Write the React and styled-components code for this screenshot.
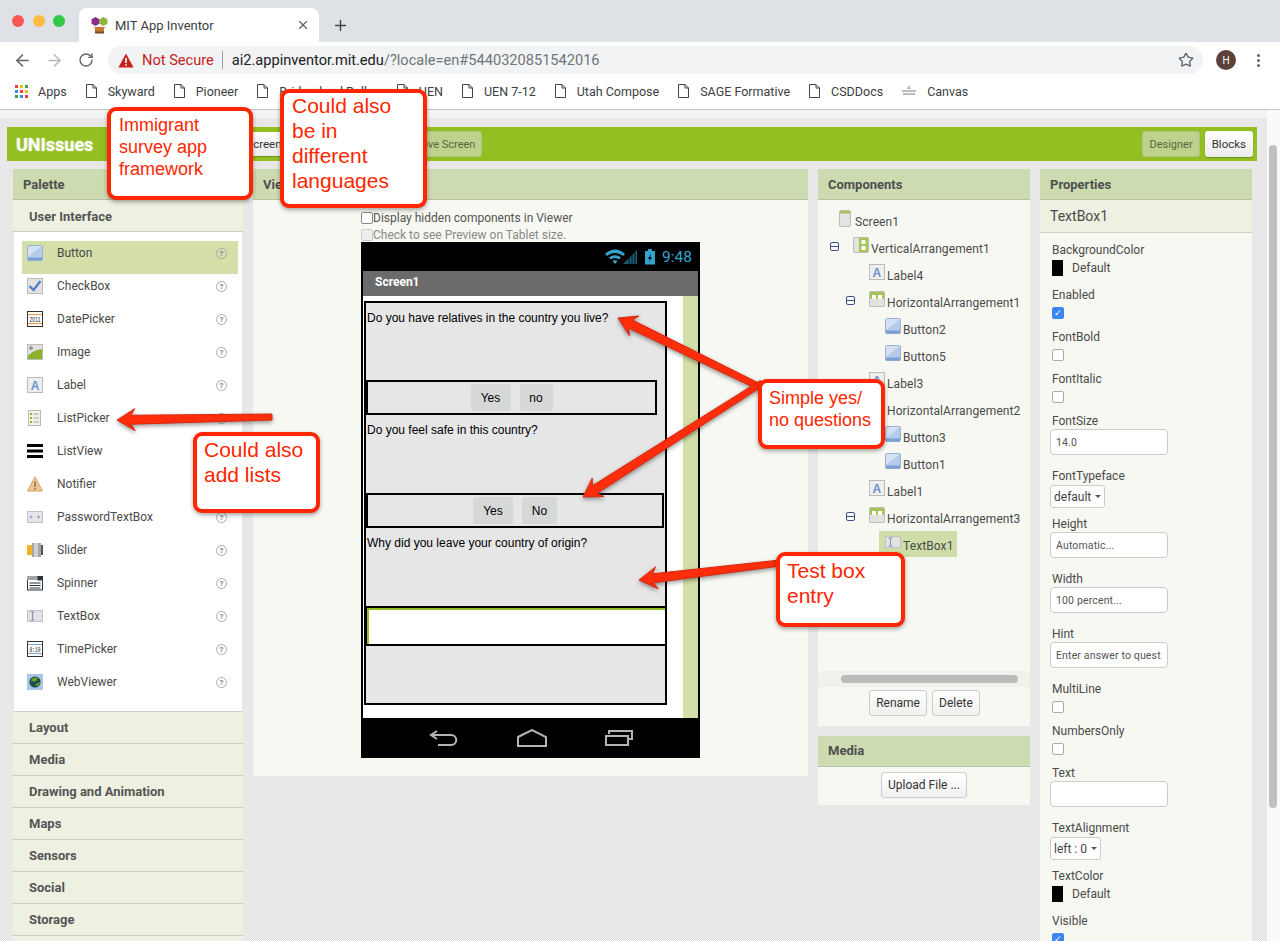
import React from 'react';
import styled, { createGlobalStyle } from 'styled-components';
import { ArrowLeft, ArrowRight, RotateCw, Star, X, Plus } from 'lucide-react';

const GlobalStyle = createGlobalStyle`
  html, body {
    margin: 0;
    padding: 0;
    height: 941px;
    overflow: hidden;
    background: #fff;
    font-family: Roboto, "Liberation Sans", sans-serif;
  }
  * { box-sizing: border-box; }
`;

const PALETTE = [
  'Button', 'CheckBox', 'DatePicker', 'Image', 'Label', 'ListPicker', 'ListView',
  'Notifier', 'PasswordTextBox', 'Slider', 'Spinner', 'TextBox', 'TimePicker', 'WebViewer',
];

const CATEGORIES = ['Layout', 'Media', 'Drawing and Animation', 'Maps', 'Sensors', 'Social', 'Storage', ''];

const BOOKMARKS = ['Skyward', 'Pioneer', 'Bridgerland Roller', 'UEN', 'UEN 7-12', 'Utah Compose', 'SAGE Formative', 'CSDDocs'];

const TREE = [
  { name: 'Screen1', icon: 'Screen', level: 0 },
  { name: 'VerticalArrangement1', icon: 'Vertical', level: 1, open: true },
  { name: 'Label4', icon: 'Label', level: 2 },
  { name: 'HorizontalArrangement1', icon: 'Horizontal', level: 2, open: true },
  { name: 'Button2', icon: 'Button', level: 3 },
  { name: 'Button5', icon: 'Button', level: 3 },
  { name: 'Label3', icon: 'Label', level: 2 },
  { name: 'HorizontalArrangement2', icon: 'Horizontal', level: 2, open: true },
  { name: 'Button3', icon: 'Button', level: 3 },
  { name: 'Button1', icon: 'Button', level: 3 },
  { name: 'Label1', icon: 'Label', level: 2 },
  { name: 'HorizontalArrangement3', icon: 'Horizontal', level: 2, open: true },
  { name: 'TextBox1', icon: 'TextBox', level: 3, selected: true },
];

const ARROWS = [
  { tip: [117, 420], tail: [272, 417] },
  { tip: [618, 318], tail: [762, 388] },
  { tip: [583, 497], tail: [762, 383] },
  { tip: [639, 580], tail: [780, 563] },
];

function arrowPoints({ tip, tail }) {
  const len = Math.hypot(tail[0] - tip[0], tail[1] - tip[1]);
  const ux = (tail[0] - tip[0]) / len;
  const uy = (tail[1] - tip[1]) / len;
  const at = (along, side) => `${tip[0] + ux * along - uy * side},${tip[1] + uy * along + ux * side}`;
  return [
    at(0, 0), at(18, 11), at(14, 4.5), at(len, 3), at(len, -3), at(14, -4.5), at(18, -11),
  ].join(' ');
}

function Glyph({ name }) {
  const shapes = {
    Button: (
      <>
        <rect x=".5" y=".5" width="15" height="15" rx="1.5" fill="#b5cbea" stroke="#9db1cf" />
        <path d="M1 1h14L1 12z" fill="#d4e1f3" />
        <rect x="1" y="12.5" width="14" height="3" fill="#7d9fd3" />
      </>
    ),
    CheckBox: (
      <>
        <rect x=".5" y=".5" width="15" height="15" fill="#e2e2e2" stroke="#bbb" />
        <path d="M2.5 8l4 4 7-9" fill="none" stroke="#4f81c7" strokeWidth="2.4" />
      </>
    ),
    DatePicker: (
      <>
        <rect x=".5" y=".5" width="15" height="15" fill="#fff" stroke="#333" />
        <path d="M1 3.5h14M1 12.5h14" stroke="#e8983a" />
        <text x="2.5" y="11" fontSize="8" textLength="11" lengthAdjust="spacingAndGlyphs" fontFamily="Liberation Sans" fill="#222">2011</text>
      </>
    ),
    Image: (
      <>
        <rect x=".5" y=".5" width="15" height="15" fill="#e2e2e2" stroke="#bbb" />
        <circle cx="4" cy="4" r="2" fill="#999" />
        <path d="M1 12c4-5 9-6 14-7v10H1z" fill="#8db02f" />
      </>
    ),
    Label: (
      <>
        <rect x=".5" y=".5" width="15" height="15" fill="#eee" stroke="#bbb" />
        <text x="8" y="12.5" fontSize="12" fontWeight="700" textAnchor="middle" fontFamily="Liberation Sans" fill="#6f93cc">A</text>
      </>
    ),
    ListPicker: (
      <>
        <rect x="1.5" y=".5" width="12" height="15" fill="#f2f2e8" stroke="#bbb" />
        <path d="M3 4h2M3 8h2M3 12h2" stroke="#8db02f" strokeWidth="2" />
        <path d="M6.5 4h5.5M6.5 8h5.5M6.5 12h5.5" stroke="#aaa" />
      </>
    ),
    ListView: <path d="M0 2.5h16M0 8h16M0 13.5h16" stroke="#000" strokeWidth="3" />,
    Notifier: (
      <>
        <path d="M8 1l7.5 14H.5z" fill="#f1c78e" stroke="#c9a36d" />
        <path d="M8 5.5v5.5M8 12v1.5" stroke="#7a6a55" strokeWidth="1.4" />
      </>
    ),
    PasswordTextBox: (
      <>
        <rect x=".5" y="2.5" width="15" height="11" fill="#e6e6e6" stroke="#c2c2c2" />
        <path d="M4 6.5v3M2.5 8h3M11.5 6.5v3M10 8h3" stroke="#7d9fd3" />
      </>
    ),
    Slider: (
      <>
        <rect y="3" width="7" height="10" fill="#f0b323" />
        <rect x="5" y="1" width="9" height="14" fill="#a5a5a5" />
        <rect x="7" y="1" width="4" height="14" fill="#d0d0d0" />
        <rect x="14" y="3" width="2" height="10" fill="#555" />
      </>
    ),
    Spinner: (
      <>
        <rect x=".5" y="2.5" width="15" height="12.5" fill="#fff" stroke="#2b3240" />
        <rect y="1" width="16" height="4" fill="#9fa3aa" />
        <rect x="10.5" y="1" width="5.5" height="4.5" fill="#2b3240" />
        <path d="M2.5 8h11M2.5 10.5h11M2.5 13h11" stroke="#2b3240" />
      </>
    ),
    TextBox: (
      <>
        <rect x=".5" y="2.5" width="15" height="11" fill="#e2e2e2" stroke="#c2c2c2" />
        <path d="M3.5 4h4M3.5 12h4M5.5 4v8" stroke="#7d93bd" />
      </>
    ),
    TimePicker: (
      <>
        <rect x=".5" y=".5" width="15" height="15" fill="#fff" stroke="#333" />
        <path d="M1 3.5h14M1 12.5h14" stroke="#7fa8d8" />
        <text x="2.5" y="10.8" fontSize="7.5" textLength="11" lengthAdjust="spacingAndGlyphs" fontFamily="Liberation Mono" fill="#222">8:10</text>
      </>
    ),
    WebViewer: (
      <>
        <rect width="16" height="16" fill="#a9c6ea" />
        <circle cx="8" cy="8" r="5.6" fill="#1d4f4a" />
        <path d="M4 6c2-3 5-3 7-2-1 3-4 5-7 2zM9 10l4-2c0 2-2 4-4 4z" fill="#6ea32d" />
      </>
    ),
    Screen: (
      <>
        <rect x="2.5" y=".5" width="11" height="16" rx="1.5" fill="#e4e4e4" stroke="#bbb" />
        <rect x="3" y="1" width="10" height="2.5" fill="#a5c552" />
      </>
    ),
    Vertical: (
      <>
        <rect x=".5" y=".5" width="15" height="15" rx="1" fill="#e2e2e2" stroke="#bbb" />
        <rect x="6" y="1" width="9" height="14" fill="#a5c552" />
        <rect x="8.5" y="3" width="4" height="4" fill="#fff" />
        <rect x="8.5" y="9" width="4" height="4" fill="#fff" />
      </>
    ),
    Horizontal: (
      <>
        <rect x=".5" y=".5" width="15" height="15" rx="1" fill="#e2e2e2" stroke="#bbb" />
        <rect x="1" y="1" width="14" height="7" fill="#a5c552" />
        <rect x="3" y="4" width="4" height="4" fill="#fff" />
        <rect x="9" y="4" width="4" height="4" fill="#fff" />
      </>
    ),
  };
  return <svg width="16" height="17" viewBox="0 0 16 17">{shapes[name]}</svg>;
}

function PageIcon() {
  return (
    <svg width="11" height="14" viewBox="0 0 11 14">
      <path d="M.5.5h6.5l3.5 3.5v9.5H.5zM7 .5V4h3.5" fill="#fff" stroke="#444" />
    </svg>
  );
}

function AppsIcon() {
  const colors = ['#ea4335', '#fbbc05', '#34a853', '#4285f4', '#ea4335', '#fbbc05', '#34a853', '#4285f4', '#ea4335'];
  return (
    <AppsGrid>
      {colors.map((color, i) => <AppsDot key={i} $color={color} />)}
    </AppsGrid>
  );
}

function Favicon() {
  return (
    <svg width="17" height="18" viewBox="0 0 17 18">
      <path d="M4.5 1l4 2.3v4.4l-4 2.3-4-2.3V3.3z" fill="#8a2d86" />
      <path d="M12.5 1l4 2.3v4.4l-4 2.3-4-2.3V3.3z" fill="#8db83a" />
      <path d="M2 11h13l-2 1v4H4v-4z" fill="#c77a2e" />
      <rect x="4" y="15.5" width="9" height="2" fill="#7a4a1e" />
    </svg>
  );
}

function App() {
  return (
    <Window>
      <GlobalStyle />
      <TabStrip>
        <Lights>
          <Light $color="#fc5753" />
          <Light $color="#fdbc40" />
          <Light $color="#33c748" />
        </Lights>
        <Tab>
          <Favicon />
          <TabTitle>MIT App Inventor</TabTitle>
          <X size={14} color="#5f6368" />
        </Tab>
        <NewTab><Plus size={17} strokeWidth={2} /></NewTab>
      </TabStrip>

      <Toolbar>
        <NavButton><ArrowLeft size={19} color="#5f6368" /></NavButton>
        <NavButton><ArrowRight size={19} color="#b5b8bc" /></NavButton>
        <NavButton><RotateCw size={16} color="#5f6368" /></NavButton>
        <AddressBar>
          <svg width="16" height="15" viewBox="0 0 16 15">
            <path d="M8 .5l7.6 14H.4z" fill="#c5221f" />
            <path d="M8 5v5M8 11.2v1.6" stroke="#fff" strokeWidth="1.6" />
          </svg>
          <NotSecure>Not Secure</NotSecure>
          <AddressDivider />
          <Url>ai2.appinventor.mit.edu<UrlRest>/?locale=en#5440320851542016</UrlRest></Url>
          <StarSlot><Star size={16} color="#5f6368" /></StarSlot>
        </AddressBar>
        <Avatar>H</Avatar>
        <MenuDots><i /><i /><i /></MenuDots>
      </Toolbar>

      <BookmarkBar>
        <Bookmark $tight><AppsIcon />Apps</Bookmark>
        {BOOKMARKS.map((name) => (
          <Bookmark key={name}><PageIcon />{name}</Bookmark>
        ))}
        <Bookmark>
          <svg width="14" height="14" viewBox="0 0 14 14">
            <path d="M7 1l2 4H5z" fill="#9cc3dd" />
            <path d="M0 7h14M1 10h12" stroke="#bbb" strokeWidth="2" />
          </svg>
          Canvas
        </Bookmark>
      </BookmarkBar>

      <PageArea>
        <Page>
          <TopStrip />
          <ProjectBar>
            <ProjectName>UNIssues</ProjectName>
            <LightButton>Add Screen ...</LightButton>
            <GreenButton $left>Remove Screen</GreenButton>
            <BarSpacer />
            <GreenButton>Designer</GreenButton>
            <LightButton $tall>Blocks</LightButton>
          </ProjectBar>

          <Panels>
            <PaletteColumn>
              <PanelHead>Palette</PanelHead>
              <CategoryRow $open>User Interface</CategoryRow>
              <PaletteList>
                {PALETTE.map((name, i) => (
                  <PaletteRow key={name} $active={i === 0}>
                    <Glyph name={name} />
                    <PaletteName>{name}</PaletteName>
                    <Help>?</Help>
                  </PaletteRow>
                ))}
              </PaletteList>
              {CATEGORIES.map((name, i) => <CategoryRow key={i}>{name}</CategoryRow>)}
            </PaletteColumn>

            <ViewerColumn>
              <PanelHead>Viewer</PanelHead>
              <ViewerBody>
                <ViewerOption><OptionBox />Display hidden components in Viewer</ViewerOption>
                <ViewerOption $muted><OptionBox $muted />Check to see Preview on Tablet size.</ViewerOption>
                <Phone>
                  <StatusBar>
                    <svg width="51" height="16" viewBox="0 0 51 16">
                      <path d="M0 5c6-6 14-6 20 0l-2 2c-5-4-11-4-16 0zM4 8.5c4-3 8-3 12 0l-2 2c-3-2-5-2-8 0zM7.5 12c2-1 3-1 5 0L10 15z" fill="#33a5cc" />
                      <path d="M18 15L32 1v14z" fill="#33a5cc" opacity=".55" />
                      <path d="M24 15V9M27 15V6M30 15V3" stroke="#000" strokeWidth=".8" />
                      <rect x="40" y="2" width="10" height="13.5" fill="#33a5cc" />
                      <rect x="43" y="0" width="4" height="2" fill="#33a5cc" />
                      <path d="M46 4l-3 6h2l-1 4 3-6h-2z" fill="#111" />
                    </svg>
                    <Clock>9:48</Clock>
                  </StatusBar>
                  <ScreenTitle>Screen1</ScreenTitle>
                  <ScreenBody>
                    <ScreenContent>
                      <Arrangement>
                        <Question $height={77}>Do you have relatives in the country you live?</Question>
                        <ButtonRow $width={291}>
                          <PhoneButton $width={40}>Yes</PhoneButton>
                          <PhoneButton $width={33}>no</PhoneButton>
                        </ButtonRow>
                        <Question $height={78}>Do you feel safe in this country?</Question>
                        <ButtonRow $width={298}>
                          <PhoneButton $width={40}>Yes</PhoneButton>
                          <PhoneButton $width={35}>No</PhoneButton>
                        </ButtonRow>
                        <Question $height={78}>Why did you leave your country of origin?</Question>
                        <TextBoxRow><PhoneTextBox /></TextBoxRow>
                      </Arrangement>
                    </ScreenContent>
                    <ScreenStrip />
                  </ScreenBody>
                  <NavBar>
                    <svg width="30" height="18" viewBox="0 0 30 18" fill="none" stroke="#b4b4b4" strokeWidth="2">
                      <path d="M8 2L2 6l6 4M2 6h20c7 0 7 10 0 10H9" />
                    </svg>
                    <svg width="30" height="18" viewBox="0 0 30 18" fill="none" stroke="#b4b4b4" strokeWidth="2">
                      <path d="M1 8L15 1l14 7v9H1z" />
                    </svg>
                    <svg width="30" height="18" viewBox="0 0 30 18" fill="none" stroke="#b4b4b4" strokeWidth="2">
                      <path d="M5 5V2h23v8h-3M2 7h22v9H2z" />
                    </svg>
                  </NavBar>
                </Phone>
              </ViewerBody>
            </ViewerColumn>

            <ComponentsColumn>
              <Panel>
                <PanelHead>Components</PanelHead>
                <ComponentsBody>
                  <Tree>
                    {TREE.map((node) => (
                      <TreeRow key={node.name} $level={node.level}>
                        {node.open && <Toggle />}
                        <TreeNode $selected={node.selected}>
                          <Glyph name={node.icon} />
                          <TreeName>{node.name}</TreeName>
                        </TreeNode>
                      </TreeRow>
                    ))}
                  </Tree>
                  <TreeScroll><TreeThumb /></TreeScroll>
                  <ActionRow>
                    <ActionButton>Rename</ActionButton>
                    <ActionButton>Delete</ActionButton>
                  </ActionRow>
                </ComponentsBody>
              </Panel>
              <Panel>
                <MediaHead>Media</MediaHead>
                <MediaBody>
                  <ActionButton>Upload File ...</ActionButton>
                </MediaBody>
              </Panel>
            </ComponentsColumn>

            <PropertiesColumn>
              <PanelHead>Properties</PanelHead>
              <SelectedName>TextBox1</SelectedName>
              <PropertiesBody>
                <PropLabel>BackgroundColor</PropLabel>
                <ColorRow><Swatch />Default</ColorRow>
                <PropLabel>Enabled</PropLabel>
                <PropCheck $checked>✓</PropCheck>
                <PropLabel>FontBold</PropLabel>
                <PropCheck />
                <PropLabel>FontItalic</PropLabel>
                <PropCheck />
                <PropLabel>FontSize</PropLabel>
                <PropInput>14.0</PropInput>
                <PropLabel>FontTypeface</PropLabel>
                <PropSelect $width={55}>default</PropSelect>
                <PropLabel>Height</PropLabel>
                <PropInput>Automatic...</PropInput>
                <PropLabel>Width</PropLabel>
                <PropInput>100 percent...</PropInput>
                <PropLabel>Hint</PropLabel>
                <PropInput>Enter answer to quest</PropInput>
                <PropLabel>MultiLine</PropLabel>
                <PropCheck />
                <PropLabel>NumbersOnly</PropLabel>
                <PropCheck />
                <PropLabel>Text</PropLabel>
                <PropInput />
                <PropLabel>TextAlignment</PropLabel>
                <PropSelect $width={51}>left : 0</PropSelect>
                <PropLabel>TextColor</PropLabel>
                <ColorRow><Swatch />Default</ColorRow>
                <PropLabel>Visible</PropLabel>
                <PropCheck $checked>✓</PropCheck>
              </PropertiesBody>
            </PropertiesColumn>
          </Panels>
        </Page>
        <ScrollTrack><ScrollThumb /></ScrollTrack>
      </PageArea>

      <ArrowLayer width="1280" height="941" viewBox="0 0 1280 941">
        {ARROWS.map((arrow) => (
          <polygon
            key={arrow.tip.join()}
            points={arrowPoints(arrow)}
            fill="#ff2d0b"
            stroke="#d62a10"
            strokeWidth="1"
          />
        ))}
      </ArrowLayer>

      <Callout $x={107} $y={107} $w={146} $h={93} $top={3} $left={8} $size={18} $line={22}>Immigrant<br />survey app<br />framework</Callout>
      <Callout $x={280} $y={89} $w={147} $h={119} $top={0} $left={8} $size={21} $line={25}>Could also<br />be in<br />different<br />languages</Callout>
      <Callout $x={193} $y={432} $w={127} $h={81} $top={1} $left={7} $size={21} $line={25}>Could also<br />add lists</Callout>
      <Callout $x={758} $y={379} $w={127} $h={70} $top={4} $left={7} $size={18} $line={22}>Simple yes/<br />no questions</Callout>
      <Callout $x={776} $y={552} $w={129} $h={75} $top={2} $left={7} $size={21} $line={25}>Test box<br />entry</Callout>
    </Window>
  );
}

export default App;

const Window = styled.div`
  position: relative;
  width: 1280px;
  height: 941px;
  overflow: hidden;
  display: flex;
  flex-direction: column;
`;

const TabStrip = styled.div`
  height: 42px;
  flex: none;
  background: #dee1e6;
  display: flex;
  align-items: flex-end;
  padding-left: 12px;
`;

const Lights = styled.div`
  display: flex;
  gap: 8.5px;
  align-self: flex-start;
  margin-top: 15px;
  margin-right: 14px;
`;

const Light = styled.span`
  width: 12px;
  height: 12px;
  border-radius: 50%;
  background: ${(p) => p.$color};
`;

const Tab = styled.div`
  width: 240px;
  height: 34px;
  background: #fff;
  border-radius: 8px 8px 0 0;
  display: flex;
  align-items: center;
  padding: 0 9px 0 12px;
`;

const TabTitle = styled.span`
  flex: 1;
  margin-left: 7px;
  font-size: 13px;
  color: #3c4043;
`;

const NewTab = styled.span`
  display: flex;
  align-self: center;
  margin: 8px 0 0 13px;
  color: #444;
`;

const Toolbar = styled.div`
  height: 36px;
  flex: none;
  background: #fff;
  display: flex;
  align-items: center;
  padding: 0 0 0 6px;
`;

const NavButton = styled.span`
  width: 32px;
  display: flex;
  justify-content: center;
`;

const AddressBar = styled.div`
  width: 1095px;
  height: 28px;
  margin: 0 0 0 6px;
  border-radius: 14px;
  background: #f1f3f4;
  display: flex;
  align-items: center;
  padding: 0 9px 0 10px;
  font-size: 14.6px;
`;

const NotSecure = styled.span`
  margin-left: 8px;
  color: #c5221f;
`;

const AddressDivider = styled.span`
  width: 1px;
  height: 18px;
  margin: 0 9px 0 8px;
  background: #9aa0a6;
`;

const Url = styled.span`
  flex: 1;
  color: #202124;
`;

const UrlRest = styled.span`
  color: #70757a;
`;

const StarSlot = styled.span`
  display: flex;
`;

const Avatar = styled.span`
  width: 20px;
  height: 20px;
  margin-left: 13px;
  border-radius: 50%;
  background: #5d4037;
  color: #fff;
  font-size: 10px;
  display: flex;
  align-items: center;
  justify-content: center;
`;

const MenuDots = styled.span`
  display: flex;
  flex-direction: column;
  gap: 2px;
  margin-left: 21px;
  i {
    width: 3px;
    height: 3px;
    border-radius: 50%;
    background: #5f6368;
  }
`;

const BookmarkBar = styled.div`
  height: 32px;
  flex: none;
  background: #fff;
  border-bottom: 1px solid #c4c4c4;
  display: flex;
  align-items: center;
  gap: 19px;
  padding: 0 0 5px 15px;
  font-size: 12.5px;
  color: #3c4043;
`;

const Bookmark = styled.span`
  display: flex;
  align-items: center;
  gap: ${(p) => (p.$tight ? '10px' : '11px')};
  white-space: nowrap;
`;

const AppsGrid = styled.span`
  display: grid;
  grid-template-columns: repeat(3, 3px);
  gap: 2px;
`;

const AppsDot = styled.span`
  width: 3px;
  height: 3px;
  background: ${(p) => p.$color};
`;

const PageArea = styled.div`
  flex: 1;
  min-height: 0;
  display: flex;
`;

const Page = styled.div`
  width: 1267px;
  flex: none;
  background: repeating-conic-gradient(#e0e0e0 0 25%, #f0f0f0 0 50%) 0 0 / 2px 2px;
`;

const TopStrip = styled.div`
  height: 8px;
  background: #f3f3f3;
`;

const ProjectBar = styled.div`
  height: 34px;
  margin: 9px 10px 0 7px;
  background: #93bf22;
  display: flex;
  align-items: center;
  padding: 0 4px 0 9px;
  gap: 5px;
`;

const ProjectName = styled.span`
  width: 195px;
  font-size: 18px;
  font-weight: 700;
  color: #fff;
  text-shadow: 0 0 2px rgba(255, 255, 255, 0.6);
`;

const BarSpacer = styled.span`
  flex: 1;
`;

const LightButton = styled.span`
  height: ${(p) => (p.$tall ? '26px' : '24px')};
  padding: 0 7px;
  border-radius: 3px;
  background: linear-gradient(#fff, #ececec);
  box-shadow: 0 1px 1px rgba(0, 0, 0, 0.25);
  font-size: 11.5px;
  color: #333;
  display: flex;
  align-items: center;
`;

const GreenButton = styled.span`
  height: 26px;
  margin-left: ${(p) => (p.$left ? '87px' : '0')};
  padding: 0 6px;
  border-radius: 3px;
  background: #bdd28d;
  border: 1px solid #aec47a;
  font-size: 11px;
  color: #59683f;
  display: flex;
  align-items: center;
`;

const Panels = styled.div`
  display: flex;
  gap: 10px;
  margin-top: 8px;
  padding-left: 13px;
  align-items: flex-start;
`;

const Panel = styled.section`
  display: flex;
  flex-direction: column;
`;

const PanelHead = styled.div`
  height: 31px;
  flex: none;
  background: #cddbb0;
  border-bottom: 1px solid #b8c2a2;
  padding-left: 10px;
  font-size: 13px;
  font-weight: 700;
  color: #4f4f4f;
  display: flex;
  align-items: center;
`;

const MediaHead = styled(PanelHead)`
  padding-bottom: 2px;
`;

const PaletteColumn = styled(Panel)`
  width: 230px;
`;

const CategoryRow = styled.div`
  height: 32px;
  flex: none;
  background: #eef1e2;
  border-bottom: 1px solid #cfcfc4;
  padding: ${(p) => (p.$open ? '1px' : '0')} 0 0 16px;
  font-size: 13px;
  font-weight: 700;
  color: #555;
  display: flex;
  align-items: center;
`;

const PaletteList = styled.div`
  height: 480px;
  flex: none;
  background: #fff;
  margin: 0 1px;
  padding: 9px 4px 0 8px;
  border-bottom: 1px solid #cfcfc4;
`;

const PaletteRow = styled.div`
  height: 33px;
  display: flex;
  align-items: center;
  padding: 0 11px 8px 5px;
  background: ${(p) => (p.$active ? '#d4dfa9' : 'transparent')};
`;

const PaletteName = styled.span`
  flex: 1;
  margin-left: 14px;
  margin-top: -1px;
  font-size: 12px;
  color: #4a4a4a;
`;

const Help = styled.span`
  width: 11px;
  height: 11px;
  border: 1px solid #aaa;
  border-radius: 50%;
  font-size: 8px;
  font-weight: 700;
  color: #888;
  display: flex;
  align-items: center;
  justify-content: center;
`;

const ViewerColumn = styled(Panel)`
  width: 555px;
`;

const ViewerBody = styled.div`
  height: 576px;
  background: #f7f8f2;
  padding: 9px 0 0 108px;
`;

const ViewerOption = styled.div`
  height: 17px;
  display: flex;
  align-items: center;
  font-size: 12px;
  color: ${(p) => (p.$muted ? '#888' : '#555')};
`;

const OptionBox = styled.span`
  width: 12px;
  height: 12px;
  border: 1px solid ${(p) => (p.$muted ? '#ccc' : '#888')};
  border-radius: 2px;
  background: ${(p) => (p.$muted ? '#eee' : '#fff')};
`;

const Phone = styled.div`
  width: 339px;
  height: 516px;
  margin-top: -1px;
  background: #000;
  padding: 0 2px;
  display: flex;
  flex-direction: column;
`;

const StatusBar = styled.div`
  height: 29px;
  flex: none;
  display: flex;
  align-items: center;
  justify-content: flex-end;
  gap: 6px;
  padding: 0 6px 0 0;
`;

const Clock = styled.span`
  font-size: 15.5px;
  color: #33a5cc;
`;

const ScreenTitle = styled.div`
  height: 25px;
  flex: none;
  background: #6b6b6b;
  padding: 0 0 3px 12px;
  font-size: 12px;
  font-weight: 700;
  color: #fff;
  display: flex;
  align-items: center;
`;

const ScreenBody = styled.div`
  height: 422px;
  flex: none;
  background: #fff;
  display: flex;
`;

const ScreenContent = styled.div`
  flex: 1;
  padding: 5px 0 0 1px;
`;

const ScreenStrip = styled.div`
  width: 15px;
  background: #d3dfa8;
`;

const Arrangement = styled.div`
  width: 303px;
  height: 404px;
  border: 2px solid #000;
  background: #e6e6e6;
  display: flex;
  flex-direction: column;
  font-family: "Liberation Sans", sans-serif;
  font-size: 12px;
  color: #000;
`;

const Question = styled.div`
  height: ${(p) => p.$height}px;
  flex: none;
  padding: 8px 0 0 1px;
  line-height: 14px;
`;

const ButtonRow = styled.div`
  width: ${(p) => p.$width}px;
  height: 35px;
  flex: none;
  border: 2px solid #000;
  display: flex;
  align-items: center;
  justify-content: center;
  gap: 9px;
`;

const PhoneButton = styled.span`
  width: ${(p) => p.$width}px;
  height: 27px;
  border-radius: 2px;
  background: #d6d7d7;
  display: flex;
  align-items: center;
  justify-content: center;
`;

const TextBoxRow = styled.div`
  height: 40px;
  flex: none;
  border-top: 2px solid #000;
  border-bottom: 2px solid #000;
  border-left: 1px solid #000;
`;

const PhoneTextBox = styled.div`
  height: 36px;
  background: #fff;
  border-top: 2px solid #93bf22;
  border-left: 2px solid #93bf22;
`;

const NavBar = styled.div`
  flex: 1;
  display: flex;
  align-items: center;
  justify-content: space-between;
  padding: 0 64px 0 66px;
`;

const ComponentsColumn = styled.div`
  width: 212px;
  display: flex;
  flex-direction: column;
  gap: 10px;
`;

const ComponentsBody = styled.div`
  height: 526px;
  background: #f7f8f2;
  display: flex;
  flex-direction: column;
`;

const Tree = styled.div`
  height: 471px;
  padding-top: 5px;
  font-size: 12px;
  letter-spacing: 0.1px;
  color: #4a4a4a;
`;

const TreeRow = styled.div`
  height: 27px;
  display: flex;
  align-items: flex-start;
  padding-left: ${(p) => 19 + p.$level * 16}px;
`;

const Toggle = styled.span`
  width: 9px;
  height: 9px;
  margin: 10px 14px 0 -23px;
  border: 1px solid #3d4f8e;
  border-radius: 2px;
  background: linear-gradient(#fff 40%, #3d4f8e 40%, #3d4f8e 60%, #fff 60%);
`;

const TreeNode = styled.span`
  height: 26px;
  display: flex;
  align-items: flex-start;
  margin: 2px 0 0 -6px;
  padding: 3px 3px 0 6px;
  background: ${(p) => (p.$selected ? '#cfdea9' : 'transparent')};
`;

const TreeName = styled.span`
  margin: 5px 0 0 2px;
  line-height: 14px;
  white-space: nowrap;
`;

const TreeScroll = styled.div`
  height: 16px;
  background: #f0f1ea;
  padding: 4px 12px 0 23px;
`;

const TreeThumb = styled.div`
  height: 8px;
  border-radius: 4px;
  background: #bbb;
`;

const ActionRow = styled.div`
  display: flex;
  justify-content: center;
  gap: 5px;
  padding: 3px 0 0 1px;
`;

const ActionButton = styled.span`
  height: 26px;
  padding: 0 6px;
  border: 1px solid #ccc;
  border-radius: 3px;
  background: linear-gradient(#fff, #f0f0f0);
  font-size: 12px;
  color: #333;
  display: flex;
  align-items: center;
`;

const MediaBody = styled.div`
  height: 38px;
  background: #f7f8f2;
  display: flex;
  justify-content: center;
  padding-top: 5px;
`;

const PropertiesColumn = styled(Panel)`
  width: 212px;
`;

const SelectedName = styled.div`
  height: 33px;
  background: #eef1e2;
  border-bottom: 1px solid #cfcfc4;
  padding-left: 10px;
  font-size: 14px;
  color: #4a4a4a;
  display: flex;
  align-items: center;
`;

const PropertiesBody = styled.div`
  height: 720px;
  background: #f7f8f2;
  padding: 9px 0 0 10px;
`;

const PropLabel = styled.div`
  height: 16px;
  padding-left: 2px;
  font-size: 12px;
  line-height: 16px;
  color: #4a4a4a;
`;

const ColorRow = styled.div`
  height: 17px;
  margin: 1px 0 11px 2px;
  display: flex;
  align-items: center;
  gap: 9px;
  font-size: 12px;
  color: #4a4a4a;
`;

const Swatch = styled.span`
  width: 11px;
  height: 16px;
  background: #000;
`;

const PropCheck = styled.div`
  width: 12px;
  height: 12px;
  margin: 4px 0 10px 2px;
  border-radius: 2px;
  border: 1px solid ${(p) => (p.$checked ? '#3b86f0' : '#aaa')};
  background: ${(p) => (p.$checked ? '#3b86f0' : '#fff')};
  color: #fff;
  font-size: 9px;
  line-height: 10px;
  text-align: center;
`;

const PropInput = styled.div`
  width: 118px;
  height: 26px;
  margin-bottom: 13px;
  padding-left: 5px;
  border: 1px solid #ccc;
  border-radius: 4px;
  background: #fff;
  font-size: 10.5px;
  letter-spacing: 0.15px;
  color: #555;
  display: flex;
  align-items: center;
  white-space: nowrap;
  overflow: hidden;
`;

const PropSelect = styled.div`
  width: ${(p) => p.$width}px;
  height: 23px;
  margin: 1px 0 8px;
  padding-left: 3px;
  border: 1px solid #ccc;
  border-radius: 3px;
  background: #fff;
  font-size: 12px;
  color: #444;
  display: flex;
  align-items: center;
  &::after {
    content: '';
    margin-left: 4px;
    border: 3px solid transparent;
    border-top: 3px solid #555;
    border-bottom: 0;
  }
`;

const ScrollTrack = styled.div`
  flex: 1;
  background: #fafafa;
  padding: 35px 3px 0 2px;
`;

const ScrollThumb = styled.div`
  height: 663px;
  border-radius: 4px;
  background: #c0c0c0;
`;

const ArrowLayer = styled.svg`
  position: absolute;
  left: 0;
  top: 0;
  pointer-events: none;
  filter: drop-shadow(0 2px 2px rgba(0, 0, 0, 0.4));
`;

const Callout = styled.div`
  position: absolute;
  left: ${(p) => p.$x}px;
  top: ${(p) => p.$y}px;
  width: ${(p) => p.$w}px;
  height: ${(p) => p.$h}px;
  padding: ${(p) => p.$top}px 0 0 ${(p) => p.$left}px;
  border: 4px solid #ff2600;
  border-radius: 9px;
  background: #fff;
  box-shadow: 0 2px 4px rgba(0, 0, 0, 0.35);
  font-family: "Liberation Sans", sans-serif;
  font-size: ${(p) => p.$size}px;
  line-height: ${(p) => p.$line}px;
  color: #ff2600;
`;
